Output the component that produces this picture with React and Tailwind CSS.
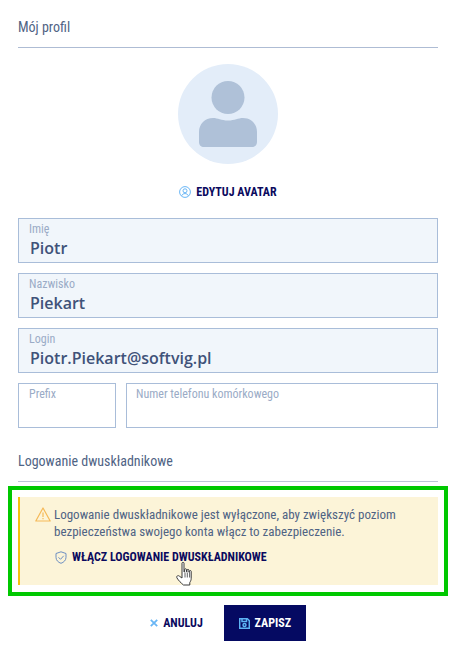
const roboto = { fontFamily: 'Roboto, sans-serif' };

function Field({ label, value, filled, className }) {
  return (
    <div className={`h-[45px] border border-[#a9bdd9] pl-[10px] ${filled ? 'bg-[#f1f6fb]' : 'bg-white'} ${className || ''}`}>
      <div className="text-[12px] leading-[13px] mt-[4px] text-[#9aabc6]">{label}</div>
      {value && (
        <div className="ml-[1px] mt-[2px] text-[16px] leading-[20px] font-semibold text-[#3f5279] font-['Open_Sans',sans-serif] [font-stretch:96%]">{value}</div>
      )}
    </div>
  );
}

function Hand() {
  return (
    <svg width="19" height="26" viewBox="0 0 19 26" className="absolute left-[156px] top-[64px]">
      <path d="M6 2.200c0-1.200 2-1.200 2 0V11l.6-.2V8.600c0-1.100 1.900-1.100 1.900 0v2.200l.5.100V9.200c0-1.100 1.900-1.100 1.900 0v2l.5.100v-1c0-1 1.800-1 1.800 0v7c0 2-.8 3.200-1.400 4.200v2.500H7.500c-2.500-2-5-4.500-6.500-7-1-1.700.9-3.200 2.400-1.800L6 17Z" fill="#fff" stroke="#3a3a3a" strokeWidth="1" strokeLinejoin="round" />
      <path d="M9 11.500v5M11.300 11.500v5M13.600 11.500v5" stroke="#3a3a3a" strokeWidth="0.8" fill="none" />
    </svg>
  );
}

export default function App() {
  return (
    <div className="w-[456px] h-[659px] bg-white overflow-hidden [font-stretch:75%]" style={roboto}>
      <div className="mx-[18px] h-[48px] border-b border-[#aebcd4] pt-[18px]">
        <div className="text-[14px] leading-[18px] text-[#4f6384]">Mój profil</div>
      </div>

      <div className="flex justify-center mt-[16px]">
        <div className="w-[100px] h-[100px] rounded-full bg-[#e3edf9] flex items-center justify-center">
          <svg width="58" height="66" viewBox="0 0 58 66" className="mt-[-1px]">
            <circle cx="29" cy="16.500" r="16.500" fill="#afc1d8" />
            <path d="M14 37c5 0 8 2.500 15 2.500S39 37 44 37c8 0 14 6 14 14v10c0 3-2 5-5 5H5c-3 0-5-2-5-5V51c0-8 6-14 14-14Z" fill="#afc1d8" />
          </svg>
        </div>
      </div>

      <div className="flex justify-center items-center gap-[5px] mt-[21px] h-[14px]">
        <svg width="12" height="12" viewBox="0 0 12 12" fill="none" stroke="#69b6f5" strokeWidth="1">
          <circle cx="6" cy="6" r="5.400" />
          <circle cx="6" cy="4.800" r="2" />
          <path d="M2.600 9.800c.6-1.500 1.900-2.200 3.400-2.200s2.800.7 3.400 2.200" />
        </svg>
        <span className="text-[12px] leading-[14px] font-bold text-[#0b0a5e]">EDYTUJ AVATAR</span>
      </div>

      <div className="mx-[18px] mt-[19px] flex flex-col gap-[10px]">
        <Field label="Imię" value="Piotr" filled />
        <Field label="Nazwisko" value="Piekart" filled />
        <Field label="Login" value="Piotr.Piekart@softvig.pl" filled />
        <div className="flex gap-[10px]">
          <Field label="Prefix" className="w-[98px] shrink-0" />
          <Field label="Numer telefonu komórkowego" className="flex-1 !pl-[9px]" />
        </div>
      </div>

      <div className="mx-[18px] mt-[24px] h-[30px] border-b border-[#bcc5d6]">
        <div className="text-[14px] leading-[18px] text-[#4f6384]">Logowanie dwuskładnikowe</div>
      </div>

      <div className="mx-[8px] mt-[4px] h-[110px] border-[4px] border-[#00c800] px-[6px] pt-[7px]">
        <div className="relative h-[88px] bg-[#fcf4d8] border-l-2 border-[#f6bf0e] pl-[15px] pt-[10px]">
          <div className="flex gap-[3px]">
            <svg width="16" height="15" viewBox="0 0 16 15" className="shrink-0" fill="none" stroke="#f5b958" strokeWidth="1.200" strokeLinejoin="round">
              <path d="M8 1 15.200 14H.8Z" />
              <path d="M8 5.500v4.500M8 11v1.300" />
            </svg>
            <p className="text-[13px] leading-[16.500px] text-[#4f6384]">
              Logowanie dwuskładnikowe jest wyłączone, aby zwiększyć poziom bezpieczeństwa swojego konta włącz to zabezpieczenie.
            </p>
          </div>
          <div className="flex items-center gap-[5px] mt-[10px] ml-[20px]">
            <svg width="12" height="13" viewBox="0 0 12 13" fill="none" stroke="#6d8fc2" strokeWidth="1">
              <path d="M6 .8 11 2.500v3.800c0 3-2.200 5-5 6-2.800-1-5-3-5-6V2.500Z" />
              <path d="M3.500 6.300 5.500 8.300 8.700 4.800" />
            </svg>
            <span className="text-[12px] leading-[14px] font-bold text-[#0b0a5e]">WŁĄCZ LOGOWANIE DWUSKŁADNIKOWE</span>
          </div>
          <Hand />
        </div>
      </div>

      <div className="flex justify-center mt-[9px] h-[36px] items-center">
        <div className="flex items-center gap-[5px] mr-[21px]">
          <svg width="8" height="8" viewBox="0 0 8 8" stroke="#69b6f5" strokeWidth="1.800">
            <path d="M.8.8 7.200 7.200M7.200.8.8 7.200" />
          </svg>
          <span className="text-[12px] leading-[14px] font-bold text-[#0b0a5e]">ANULUJ</span>
        </div>
        <div className="w-[82px] h-[36px] bg-[#050a62] flex items-center justify-center gap-[5px]">
          <svg width="11" height="11" viewBox="0 0 11 11" fill="none" stroke="#5db4f5" strokeWidth="1.500">
            <path d="M.7.7h7.600l2 2v7.600H.7Z" />
            <path d="M3 .8v2.700h4.500V.8" />
            <circle cx="5.500" cy="7" r="1.500" />
          </svg>
          <span className="text-[12px] leading-[14px] font-bold text-white">ZAPISZ</span>
        </div>
      </div>
    </div>
  );
}
